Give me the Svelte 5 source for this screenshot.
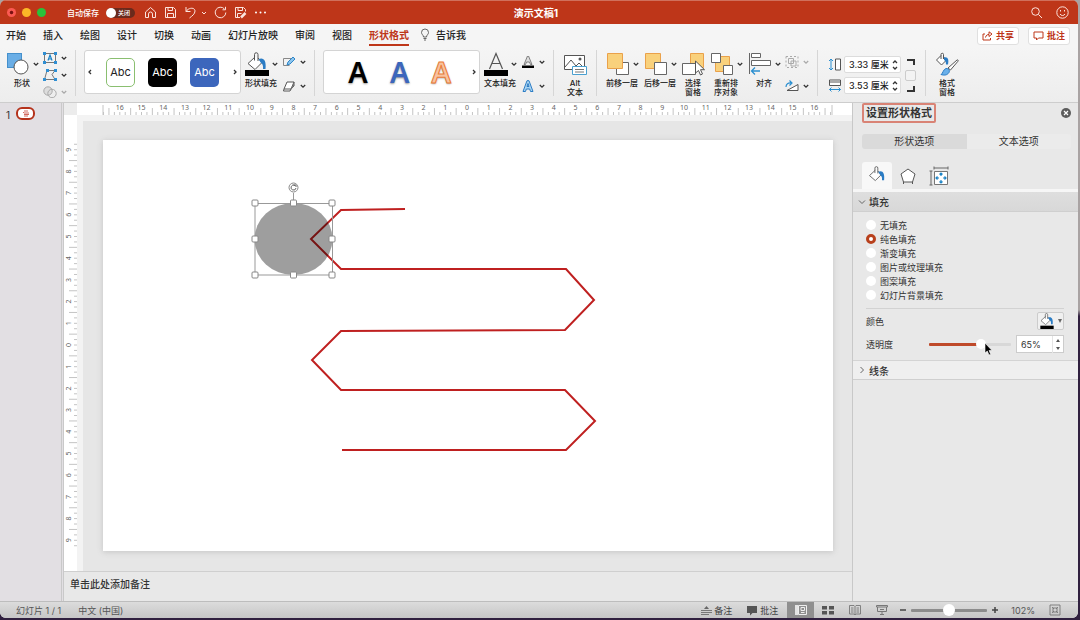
<script lang="ts">
  const tabs = ['开始', '插入', '绘图', '设计', '切换', '动画', '幻灯片放映', '审阅', '视图', '形状格式'];
  const fills = ['无填充', '纯色填充', '渐变填充', '图片或纹理填充', '图案填充', '幻灯片背景填充'];

  let activeTab = $state('形状格式');
  let fill = $state('纯色填充');
  let transparency = $state(65);
  let zoom = $state(50);
  let autoSave = $state(false);

  // Ruler ticks, four per centimetre, measured from the centre of the slide
  const unit = 21.7;

  function makeTicks(limit: number) {
    const ticks = [];
    for (let q = -limit * 4; q <= limit * 4; q++) {
      ticks.push({ pos: (q * unit) / 4, tall: Math.abs(q % 4) === 2 });
    }
    return ticks;
  }

  function makeLabels(limit: number) {
    return Array.from({ length: limit * 2 + 1 }, (_, i) => i - limit);
  }

  const hTicks = makeTicks(16.75);
  const vTicks = makeTicks(9.25);
  const hLabels = makeLabels(16);
  const vLabels = makeLabels(9);
</script>

{#snippet chevron()}
  <svg class="chev" width="6" height="6" viewBox="0 0 6 6"><path d="M.8 2L3 4.200 5.200 2" /></svg>
{/snippet}

{#snippet bucket()}
  <path d="M10 5L3 11.500 10 17.500l7-7L13 6" fill="#fff" stroke="#555" />
  <path d="M9.500 8.500V2.500a1.700 1.700 0 0 1 3.500 0V9" fill="none" stroke="#555" />
  <path d="M13.500 7c5-2 8 1 7 10h-2.500c.5-4-1-5.500-2-6z" fill="#2b7cc4" />
{/snippet}

{#snippet steppers(name: string)}
  <span class="steppers">
    <button aria-label="增加{name}"><svg width="6" height="5" viewBox="0 0 6 5"><path d="M1 4l2-2 2 2" /></svg></button>
    <button aria-label="减少{name}"><svg width="6" height="5" viewBox="0 0 6 5"><path d="M1 1l2 2 2-2" /></svg></button>
  </span>
{/snippet}

<div class="desktop">
  <div class="window">
    <header class="titlebar">
      <div class="lights">
        <button class="light close" aria-label="关闭窗口"></button>
        <button class="light min" aria-label="最小化"></button>
        <button class="light max" aria-label="全屏"></button>
      </div>
      <label class="autosave">
        <span>自动保存</span>
        <input type="checkbox" bind:checked={autoSave} />
        <span class="switch"><i></i>关闭</span>
      </label>
      <div class="quick">
        <button aria-label="主页"><svg width="13" height="13" viewBox="0 0 13 13"><path d="M1.500 6L6.500 1.500l5 4.500v5.500H8.500V8a2 2 0 0 0-4 0v3.500h-3z" /></svg></button>
        <button aria-label="保存"><svg width="13" height="13" viewBox="0 0 13 13"><path d="M1.500 1.500h8l2 2v8h-10zM4 1.500v3h4.500v-3M3.500 11.500v-4h6v4" /></svg></button>
        <button class="undo" aria-label="撤销"><svg width="13" height="13" viewBox="0 0 13 13"><path d="M2 1v4.500h4.500M2 5.500C5 1 11 1.500 11 5c0 3-3 5-5.500 7" /></svg><svg width="6" height="6" viewBox="0 0 6 6"><path d="M1 2l2 2 2-2" /></svg></button>
        <button aria-label="重做"><svg width="13" height="13" viewBox="0 0 13 13"><path d="M10.500 3a5.300 5.300 0 1 0 1.300 3.500M11.500.8v3H8.500" /></svg></button>
        <button aria-label="另存为"><svg width="13" height="13" viewBox="0 0 13 13"><path d="M6 11.500H1.500v-10h8l2 2v2M4 1.500v3h4.500v-3M3.500 11.500v-4h4" /><path d="M7 11.500l4.500-4.500" stroke-width="2.500" /></svg></button>
        <button aria-label="更多"><svg width="13" height="13" viewBox="0 0 13 13"><g fill="#fff" stroke="none"><circle cx="2" cy="6.500" r="1" /><circle cx="6.500" cy="6.500" r="1" /><circle cx="11" cy="6.500" r="1" /></g></svg></button>
      </div>
      <h1>演示文稿1</h1>
      <div class="title-right">
        <button aria-label="搜索"><svg width="13" height="13" viewBox="0 0 13 13"><circle cx="5.500" cy="5.500" r="3.800" /><path d="M8.500 8.500L12 12" /></svg></button>
        <button aria-label="反馈"><svg width="13" height="13" viewBox="0 0 13 13"><circle cx="6.500" cy="6.500" r="5.700" /><path d="M4 8c1 2 4 2 5 0M4.500 4v1.500M8.500 4v1.500" /></svg></button>
      </div>
    </header>

    <nav class="tabs">
      {#each tabs as tab}
        <button class:active={activeTab === tab} onclick={() => (activeTab = tab)}>{tab}</button>
      {/each}
      <button class="tell">
        <svg width="10" height="13" viewBox="0 0 10 13"><path d="M3.500 9C3.500 7 1.500 6.500 1.500 4.500a3.500 3.500 0 0 1 7 0C8.500 6.500 6.500 7 6.500 9zM3.500 10.500h3M4 12h2" fill="none" stroke="#555" stroke-width=".9" /></svg>
        告诉我
      </button>
      <div class="share">
        <button>
          <svg width="11" height="10" viewBox="0 0 11 10"><path d="M3 3H1v6h7.500V7M3.500 6.500C4 4 5.500 3.500 7 3.500V5.500L10 3 7 .8V3" /></svg>共享
        </button>
        <button>
          <svg width="11" height="10" viewBox="0 0 11 10"><path d="M1 1h9v6H5.500L3.500 9V7H1z" /></svg>批注
        </button>
      </div>
    </nav>

    <div class="ribbon">
      <button class="big">
        <span class="top">
          <svg width="24" height="24" viewBox="0 0 24 24"><rect x="1.500" y="1.500" width="14" height="14" fill="#6aaee6" stroke="#4590cc" /><circle cx="15" cy="15" r="7" fill="#fff" stroke="#555" /></svg>
          {@render chevron()}
        </span>
        <span>形状</span>
      </button>
      <div class="mini three">
        <button aria-label="文本框">
          <svg width="14" height="12" viewBox="0 0 14 12"><rect x="1.500" y="1.500" width="11" height="9" fill="none" stroke="#777" /><path d="M5 8.500l2-5.500 2 5.500M5.500 7h3" fill="none" stroke="#1c84c6" stroke-width="1.200" /><path d="M0 0h3v3H0zM11 0h3v3h-3zM0 9h3v3H0zM11 9h3v3h-3z" fill="#2f8fd3" /></svg>
          {@render chevron()}
        </button>
        <button aria-label="编辑形状">
          <svg width="14" height="12" viewBox="0 0 14 12"><path d="M4 1.500L1.500 10.500h10M4 1.500h8L9 5.500l3 5" fill="none" stroke="#777" /><path d="M3 0h3v3H3zM11 0h3v3h-3zM0 9h3v3H0zM11 9h3v3h-3z" fill="#2f8fd3" /></svg>
          {@render chevron()}
        </button>
        <button aria-label="合并形状" disabled>
          <svg width="14" height="12" viewBox="0 0 14 12"><circle cx="5" cy="5" r="4.200" fill="#ddd" stroke="#aaa" /><circle cx="9" cy="7.500" r="4.200" fill="none" stroke="#aaa" /></svg>
          {@render chevron()}
        </button>
      </div>
      <i class="rule"></i>

      <div class="gallery">
        <button class="turn" aria-label="上一个样式"><svg width="6" height="6" viewBox="0 0 6 6"><path d="M4 1L2 3l2 2" /></svg></button>
        <button class="swatch outline">Abc</button>
        <button class="swatch black">Abc</button>
        <button class="swatch blue">Abc</button>
        <button class="turn" aria-label="下一个样式"><svg width="6" height="6" viewBox="0 0 6 6"><path d="M2 1l2 2-2 2" /></svg></button>
      </div>
      <button class="big near">
        <span class="top">
          <svg width="24" height="24" viewBox="0 0 24 24">{@render bucket()}<path d="M0 18h24v6H0z" /></svg>
          {@render chevron()}
        </span>
        <span>形状填充</span>
      </button>
      <div class="mini">
        <button aria-label="形状轮廓">
          <svg width="14" height="12" viewBox="0 0 14 12"><path d="M10 2.500H1.500v7h6" fill="none" stroke="#888" /><path d="M5 9l1-3 5-5 2 2-5 5z" fill="#8cc5ee" stroke="#2f86c8" /></svg>
          {@render chevron()}
        </button>
        <button aria-label="形状效果">
          <svg width="14" height="12" viewBox="0 0 14 12"><path d="M5 2h7L9 9H2zM2 9l-.5 2H8l1-2M9 9l3-3V2" fill="#fff" stroke="#555" /><path d="M9 9l3-7v4L8 11z" fill="#777" /></svg>
          {@render chevron()}
        </button>
      </div>
      <i class="rule"></i>

      <div class="gallery letters">
        <button class="word">A</button>
        <button class="word blue-word">A</button>
        <button class="word orange-word">A</button>
        <button class="turn" aria-label="更多艺术字"><svg width="6" height="6" viewBox="0 0 6 6"><path d="M2 1l2 2-2 2" /></svg></button>
      </div>
      <button class="big near">
        <span class="top">
          <svg width="24" height="24" viewBox="0 0 24 24"><path d="M5.500 17L12 1.500 18.500 17M8 11.500h8" fill="none" stroke="#555" stroke-width="1.200" /><path d="M0 18h24v6H0z" /></svg>
          {@render chevron()}
        </span>
        <span>文本填充</span>
      </button>
      <div class="mini">
        <button aria-label="文本轮廓">
          <svg width="14" height="12" viewBox="0 0 14 12"><path d="M3 8.500L6.500 0h1L11 8.500H9.500L8.500 6h-3l-1 2.500z" fill="#ddd" stroke="#666" stroke-width=".8" /><path d="M1 9.500h12V12H1z" /></svg>
          {@render chevron()}
        </button>
        <button aria-label="文本效果">
          <svg width="14" height="12" viewBox="0 0 14 12"><path d="M2 11.500L6 .7h2l4 10.800H9.500L8.700 9H5.300l-.8 2.500zM6 6.500h2L7 3.500z" fill="#a9d4f2" stroke="#2b7cc4" /></svg>
          {@render chevron()}
        </button>
      </div>
      <i class="rule"></i>

      <button class="big medium">
        <span class="top">
          <svg width="24" height="24" viewBox="0 0 24 24"><path d="M1.500 3.500h20v14h-20zM2 15l6-7 5 6 3-3 5 5" fill="#fff" stroke="#555" /><circle cx="17" cy="7" r="1.500" fill="#555" /><path d="M9.500 14.500h14v8h-14z" fill="#fff" stroke="#4aa0d0" /><path d="M12 17.500h9M12 20h9" stroke="#777" /></svg>
        </span>
        <span>Alt<br />文本</span>
      </button>
      <i class="rule"></i>

      <button class="big">
        <span class="top">
          <svg width="24" height="24" viewBox="0 0 24 24"><path d="M10.500 10.500h12v12h-12z" fill="#fff" stroke="#666" /><path d="M1.500 1.500h15v15h-15z" fill="#f9d17c" stroke="#eaa14a" /></svg>
          {@render chevron()}
        </span>
        <span>前移一层</span>
      </button>
      <button class="big step">
        <span class="top">
          <svg width="24" height="24" viewBox="0 0 24 24"><path d="M1.500 1.500h15v15h-15z" fill="#f9d17c" stroke="#eaa14a" /><path d="M10.500 10.500h12v12h-12z" fill="#fff" stroke="#666" /></svg>
          {@render chevron()}
        </span>
        <span>后移一层</span>
      </button>
      <button class="big narrow step">
        <span class="top">
          <svg width="24" height="24" viewBox="0 0 24 24"><path d="M9.500 1.500h13v14h-13z" fill="#f9d17c" stroke="#eaa14a" /><path d="M1.500 11.500h13v11h-13z" fill="#fff" stroke="#666" /><path d="M14.500 9v12l3-2.500 2 4.500 2-1-2-4.300h4z" fill="#fff" stroke="#555" /></svg>
        </span>
        <span>选择<br />窗格</span>
      </button>
      <button class="big step">
        <span class="top">
          <svg width="24" height="24" viewBox="0 0 24 24"><path d="M5.500 4.500h14v15h-14z" fill="#f9d17c" stroke="#eaa14a" /><path d="M1.500 1.500h9v9h-9zM13.500 13.500h9v9h-9z" fill="#fff" stroke="#666" /></svg>
          {@render chevron()}
        </span>
        <span>重新排<br />序对象</span>
      </button>
      <button class="big step">
        <span class="top">
          <svg width="24" height="24" viewBox="0 0 24 24"><path d="M1.500 1v21M3.500 1.500h9v4h-9zM3.500 8.500h19v5h-19z" fill="#fff" stroke="#666" /><path d="M12 19H3.500M7 15.500L3.500 19 7 22.500" fill="none" stroke="#2b8fd0" stroke-width="1.300" /></svg>
          {@render chevron()}
        </span>
        <span>对齐</span>
      </button>
      <div class="mini">
        <button aria-label="组合" disabled>
          <svg width="14" height="12" viewBox="0 0 14 12"><path d="M3.500 2.500h5v5h-5zM6 5h5v5H6z" fill="none" stroke="#aaa" /><path d="M1 .5h12v11H1z" fill="none" stroke="#aaa" stroke-dasharray="2 2" /></svg>
          {@render chevron()}
        </button>
        <button aria-label="旋转">
          <svg width="14" height="12" viewBox="0 0 14 12"><path d="M2 10.500h11v-6z" fill="#fff" stroke="#555" /><path d="M1 7C1 4 3 2.500 6.500 3M4.500.5L7 3 4.500 5.500" fill="none" stroke="#2b8fd0" stroke-width="1.200" /></svg>
          {@render chevron()}
        </button>
      </div>
      <i class="rule"></i>

      <div class="size">
        <div class="fields">
          <label>
            <svg width="14" height="13" viewBox="0 0 14 13"><path d="M3 1v11M1 3l2-2 2 2M1 10l2 2 2-2" fill="none" stroke="#2b8fd0" /><path d="M7.500 1v11h5V1z" fill="#fff" stroke="#555" /></svg>
            <span class="box"><input aria-label="高度" value="3.33 厘米" />{@render steppers('高度')}</span>
          </label>
          <label>
            <svg width="14" height="13" viewBox="0 0 14 13"><path d="M1.500 10.500h11M3.500 8.500l-2 2 2 2M10.500 8.500l2 2-2 2" fill="none" stroke="#2b8fd0" /><path d="M1.500 1v5.500h11V1zM1.500 3h11" fill="#fff" stroke="#555" /></svg>
            <span class="box"><input aria-label="宽度" value="3.53 厘米" />{@render steppers('宽度')}</span>
          </label>
        </div>
        <div class="lock">
          <svg width="8" height="6" viewBox="0 0 8 6"><path d="M0 1h7v5" /></svg>
          <input type="checkbox" aria-label="锁定纵横比" />
          <svg width="8" height="6" viewBox="0 0 8 6"><path d="M0 5h7V0" /></svg>
        </div>
      </div>
      <i class="rule"></i>

      <button class="big medium">
        <span class="top">
          <svg width="24" height="24" viewBox="0 0 24 24"><path d="M6 3.500L1.500 8 6.500 13l5-5L8.500 5M6 7V2.500a1.200 1.200 0 0 1 2.500 0V7" fill="#fff" stroke="#555" /><path d="M9 5.500c4-1 5 2 4 7h-2c0-3-1-4-2-4.500z" fill="#2b7cc4" /><path d="M13 16L22 8c1-.5 1.500.5 1 1.200L15.500 18z" fill="#fff" stroke="#555" /><path d="M6 22.500c2-1 2-5 5-6 3 0 4 2 3 4-2 3-5 3-8 2z" fill="#6ab0ea" stroke="#2b7cc4" /></svg>
        </span>
        <span>格式<br />窗格</span>
      </button>
    </div>

    <main class="work">
      <aside class="thumbs">
        <span>1</span>
        <button aria-label="幻灯片 1">
          <svg width="13" height="7" viewBox="0 0 13 7"><path d="M5 1h4M4 2l1 1h5M5 4.500h5M5 6h4" fill="none" stroke="#c7463a" stroke-width=".8" /></svg>
        </button>
      </aside>

      <section class="editor">
        <div class="stage">
          <div class="corner"></div>
          <svg class="ruler-h" width="100%" height="12">
            <g transform="translate(390 0)">
              {#each hTicks as tick}
                <line x1={tick.pos} x2={tick.pos} y1={tick.tall ? 5 : 9} y2="12" />
              {/each}
              {#each hLabels as n}
                <text x={n * unit} y="7">{Math.abs(n)}</text>
              {/each}
              <line x1="-364" x2="-364" y1="2" y2="12" />
              <line x1="365" x2="365" y1="2" y2="12" />
            </g>
          </svg>
          <svg class="ruler-v" width="13" height="100%">
            <g transform="translate(0 230)">
              {#each vTicks as tick}
                <line y1={tick.pos} y2={tick.pos} x1={tick.tall ? 5 : 10} x2="13" />
              {/each}
              {#each vLabels as n}
                <text transform="translate(7 {n * unit}) rotate(-90)">{Math.abs(n)}</text>
              {/each}
            </g>
          </svg>
          <div class="canvas">
            <svg class="slide" viewBox="0 0 730 411">
              <path d="M302 69L238 70 208 99l30 30h225l28 31-29 30-224 1-29 29 29 30h224l30 31-29 29H239" fill="none" stroke="#bf2020" stroke-width="2" />
              <ellipse cx="190.500" cy="99" rx="39" ry="36" fill="#000" fill-opacity=".38" />
              <g fill="none" stroke="#999">
                <path d="M152 63.500h77.500V135H152zM190.500 53v10" />
              </g>
              <g fill="#fff" stroke="#888">
                {#each [[152, 63], [190.5, 63], [229, 63], [152, 99], [229, 99], [152, 135], [190.5, 135], [229, 135]] as [x, y]}
                  <rect x={x - 3} y={y - 3} width="6" height="6" rx="1" />
                {/each}
                <circle cx="190.500" cy="47.500" r="4.500" />
              </g>
              <path d="M192 45.500a2.500 2.500 0 1 0 1 2.500M190.500 45h2.500v2" fill="none" stroke="#555" stroke-width=".9" />
            </svg>
          </div>
        </div>
        <div class="notes">单击此处添加备注</div>
      </section>

      <aside class="pane">
        <div class="pane-head">
          <h2>设置形状格式</h2>
          <button aria-label="关闭窗格"><svg width="10" height="10" viewBox="0 0 10 10"><circle cx="5" cy="5" r="5" fill="#5c5c5c" /><path d="M3 3l4 4M7 3L3 7" stroke="#fff" stroke-width="1.200" /></svg></button>
        </div>
        <div class="segments">
          <button class="on">形状选项</button>
          <button>文本选项</button>
        </div>
        <div class="kinds">
          <button class="on" aria-label="填充与线条"><svg width="20" height="20" viewBox="0 0 24 24">{@render bucket()}</svg></button>
          <button aria-label="效果"><svg width="20" height="20" viewBox="0 0 20 20"><path d="M10 3l7 5-2.500 8h-9L3 8z" fill="#fff" stroke="#555" /><path d="M5.500 16v2M14.500 16v2" stroke="#555" /></svg></button>
          <button aria-label="大小与属性"><svg width="20" height="20" viewBox="0 0 20 20"><path d="M5.500 5.500h13v13h-13z" fill="#fff" stroke="#777" /><path d="M5 2h14M5 .5v3M19 .5v3M2 5v14M.5 5h3M.5 19h3" stroke="#666" /><path d="M12 7v3M12 14v3M7 12h3M14 12h3M10.500 8.500L12 7l1.500 1.500M10.500 15.500L12 17l1.500-1.500M8.500 10.500L7 12l1.500 1.500M15.500 10.500L17 12l-1.500 1.500" fill="none" stroke="#1c84c6" stroke-width="1.200" /></svg></button>
        </div>
        <button class="section">
          <svg width="8" height="8" viewBox="0 0 8 8"><path d="M1 2.500l3 3 3-3" /></svg>填充
        </button>
        <div class="options">
          {#each fills as name}
            <label><input type="radio" name="fill" value={name} bind:group={fill} />{name}</label>
          {/each}
        </div>
        <div class="settings">
          <div class="row">
            <span>颜色</span>
            <button class="color" aria-label="填充颜色">
              <svg width="16" height="16" viewBox="0 0 24 24">{@render bucket()}<path d="M2 19h20v5H2z" /></svg>
              <svg width="4" height="4" viewBox="0 0 4 4"><path d="M0 0h4L2 4z" fill="#666" /></svg>
            </button>
          </div>
          <div class="row">
            <label for="transparency">透明度</label>
            <div class="slider">
              <input id="transparency" type="range" min="0" max="100" bind:value={transparency} style="--fill: {transparency}%" />
              <svg class="pointer" width="9" height="14" viewBox="0 0 9 14"><path d="M1 1v10l2.300-2 1.700 4 1.700-.8L5 8.500h3z" fill="#000" stroke="#fff" stroke-width=".6" /></svg>
            </div>
            <span class="percent">
              <input aria-label="透明度百分比" value="{transparency}%" />
              <span class="arrows">
                <button aria-label="增加"><svg width="4" height="3" viewBox="0 0 4 3"><path d="M0 3l2-3 2 3z" fill="#555" /></svg></button>
                <button aria-label="减少"><svg width="4" height="3" viewBox="0 0 4 3"><path d="M0 0l2 3 2-3z" fill="#555" /></svg></button>
              </span>
            </span>
          </div>
        </div>
        <button class="section closed">
          <svg width="8" height="8" viewBox="0 0 8 8"><path d="M2.500 1l3 3-3 3" /></svg>线条
        </button>
      </aside>
    </main>

    <footer class="status">
      <span class="count">幻灯片 1 / 1</span>
      <span>中文 (中国)</span>
      <div class="views">
        <button class="text"><svg width="11" height="11" viewBox="0 0 11 11"><path d="M0 5.500h11M0 7.500h11M0 9.500h8" stroke="#777" /><path d="M3 4l2.500-3L8 4z" fill="#666" /></svg>备注</button>
        <button class="text comments"><svg width="11" height="11" viewBox="0 0 11 11"><path d="M0 1h10v7H5.500L3 10.500V8H0z" fill="#555" /></svg>批注</button>
        <button class="view on" aria-label="普通视图"><svg width="12" height="12" viewBox="0 0 12 12"><path d="M0 1h3v10H0z" fill="#e4e4e4" /><path d="M3.500 1.500h8v9h-8zM6 3.500h3.500v3H6zM6 8.500h3.500" fill="none" stroke="#eee" /></svg></button>
        <button class="view" aria-label="幻灯片浏览"><svg width="12" height="12" viewBox="0 0 12 12"><path d="M0 2h5v3.500H0zM7 2h5v3.500H7zM0 7h5v3.500H0zM7 7h5v3.500H7z" fill="#555" /></svg></button>
        <button class="view" aria-label="阅读视图"><svg width="12" height="12" viewBox="0 0 12 12"><path d="M.5 1.500h4.500l1 1 1-1h4.500v8.500H7l-1 1-1-1H.5zM6 2.500v8M2 4h2.500M2 6h2.500M2 8h2.500M7.500 4H10M7.500 6H10M7.500 8H10" fill="none" stroke="#777" stroke-width=".9" /></svg></button>
        <button class="view" aria-label="幻灯片放映"><svg width="12" height="12" viewBox="0 0 12 12"><path d="M.5 1.500h11v1.500H.5zM1.500 3v4.500h9V3M6 7.500v3M4 10.500h4M4 5.500h4" fill="none" stroke="#777" /></svg></button>
      </div>
      <div class="zoom">
        <button aria-label="缩小"><svg width="8" height="8" viewBox="0 0 8 8"><path d="M1 4h6" stroke="#444" stroke-width="1.500" /></svg></button>
        <input type="range" min="0" max="100" aria-label="缩放" bind:value={zoom} />
        <button aria-label="放大"><svg width="8" height="8" viewBox="0 0 8 8"><path d="M1 4h6M4 1v6" stroke="#444" stroke-width="1.500" /></svg></button>
      </div>
      <span class="percent-text">102%</span>
      <button class="fit" aria-label="适应窗口"><svg width="12" height="12" viewBox="0 0 12 12"><path d="M1 1h10v10H1zM3 3l2 2M9 3L7 5M3 9l2-2M9 9L7 7M5 3v2H3M7 3v2h2M5 9V7H3M7 9V7h2" fill="none" stroke="#777" stroke-width=".9" /></svg></button>
    </footer>
  </div>
</div>

<style>
  :global(body) {
    font-family: Inter, 'Noto Sans CJK SC', sans-serif;
    font-size: 10px;
    color: #333;
  }

  .desktop {
    display: flex;
    box-sizing: border-box;
    min-height: 100vh;
    padding: 0 2px 2px 0;
    background: linear-gradient(#a9a3a3 50%, #30203f 51%);
  }

  .window {
    flex: 1;
    display: flex;
    flex-direction: column;
    min-width: 0;
    overflow: hidden;
    border-radius: 6px;
    background: #e8e8e8;
  }

  button {
    margin: 0;
    padding: 0;
    border: 0;
    background: none;
    font: inherit;
    color: inherit;
    cursor: pointer;
  }

  input {
    margin: 0;
    font: inherit;
    color: inherit;
  }

  svg {
    display: block;
    flex: none;
  }

  /* Title bar */
  .titlebar {
    display: flex;
    align-items: center;
    box-sizing: border-box;
    height: 24px;
    padding: 0 9px 0 7px;
    border-top: 1px solid #d0705c;
    background: #be3619;
    color: #fff;
  }

  .titlebar svg {
    fill: none;
    stroke: #fbe4de;
  }

  .lights {
    display: flex;
    gap: 6px;
  }

  .light {
    width: 9px;
    height: 9px;
    border-radius: 50%;
  }

  .close {
    background: radial-gradient(#7a1010 20%, #fb5a52 35%);
  }

  .min {
    background: #fcb827;
  }

  .max {
    background: #29c23a;
  }

  .autosave {
    display: flex;
    align-items: center;
    gap: 7px;
    margin-left: 21px;
    font-size: 8px;
    font-weight: 500;
  }

  .autosave input {
    position: absolute;
    opacity: 0;
  }

  .switch {
    display: flex;
    align-items: center;
    gap: 2px;
    width: 29px;
    height: 10px;
    border-radius: 5px;
    background: #6a2a1c;
    font-size: 6px;
  }

  .switch i {
    width: 10px;
    height: 10px;
    border-radius: 50%;
    background: #fff;
  }

  .quick {
    display: flex;
    gap: 7px;
    width: 124px;
    margin-left: 9px;
  }

  .undo {
    display: flex;
    align-items: center;
    gap: 4px;
  }

  h1 {
    flex: 1;
    margin: 0;
    padding-right: 226px;
    font-size: 10px;
    font-weight: 700;
    text-align: center;
  }

  .title-right {
    display: flex;
    gap: 13px;
  }

  /* Tabs */
  .tabs {
    display: flex;
    align-items: center;
    gap: 17px;
    height: 23px;
    padding: 0 8px 0 6px;
    background: #f5f5f5;
    font-weight: 500;
    color: #222;
  }

  .tabs > button {
    height: 21px;
    border-bottom: 2px solid transparent;
    white-space: nowrap;
  }

  .tabs > .active {
    border-color: #be3619;
    color: #be3619;
    font-weight: 700;
  }

  .tabs > .tell {
    display: flex;
    align-items: center;
    gap: 6px;
    margin-left: -6px;
  }

  .share {
    display: flex;
    gap: 9px;
    margin-left: auto;
    color: #be3619;
    font-size: 9px;
    font-weight: 700;
  }

  .share button {
    display: flex;
    align-items: center;
    justify-content: center;
    gap: 3px;
    box-sizing: border-box;
    width: 42px;
    height: 18px;
    border: 1px solid #e0e0e0;
    border-radius: 3px;
    background: #fff;
  }

  .share svg {
    fill: none;
    stroke: #be3619;
  }

  /* Ribbon */
  .ribbon {
    display: flex;
    align-items: flex-start;
    box-sizing: border-box;
    height: 56px;
    padding: 3px 5px 0;
    border-bottom: 1px solid #cdcdcd;
    background: linear-gradient(#f5f5f5, #ededed);
    font-size: 8px;
    font-weight: 500;
    line-height: 9px;
    color: #222;
  }

  .rule {
    flex: none;
    width: 1px;
    height: 46px;
    margin: 0 8px;
    background: #d6d6d6;
  }

  .big {
    display: flex;
    flex: none;
    flex-direction: column;
    align-items: center;
    gap: 3px;
    width: 34px;
    padding-top: 2px;
    white-space: nowrap;
  }

  .big.medium {
    width: 26px;
  }

  .big.narrow {
    width: 24px;
  }

  .big.near {
    margin-left: 3px;
  }

  .big.step {
    margin-left: 4px;
  }

  .top {
    display: flex;
    align-items: center;
    gap: 3px;
  }

  .chev,
  .turn svg,
  .steppers svg {
    fill: none;
    stroke: #333;
    stroke-width: 1.3;
  }

  :disabled .chev {
    stroke: #aaa;
  }

  .mini {
    display: flex;
    flex: none;
    flex-direction: column;
    gap: 12px;
    margin-left: 4px;
    padding-top: 6px;
  }

  .mini.three {
    gap: 5px;
    padding-top: 2px;
  }

  .mini button {
    display: flex;
    align-items: center;
    gap: 4px;
  }

  .gallery {
    display: flex;
    flex: none;
    align-items: center;
    justify-content: space-between;
    box-sizing: border-box;
    width: 157px;
    height: 44px;
    padding: 0 2px;
    border: 1px solid #d4d4d4;
    border-radius: 3px;
    background: #fff;
  }

  .swatch {
    box-sizing: border-box;
    width: 29px;
    height: 29px;
    border-radius: 5px;
    font-size: 11px;
    font-weight: 400;
  }

  .outline {
    border: 1px solid #8abf70;
  }

  .black {
    background: #000;
    color: #fff;
  }

  .blue {
    background: #3c66bc;
    color: #fff;
  }

  .letters {
    padding-left: 22px;
  }

  .word {
    width: 24px;
    font-family: 'Noto Sans', sans-serif;
    font-size: 29px;
    font-weight: 600;
    line-height: 32px;
    color: #000;
    text-shadow: 0 1px 2px #999;
  }

  .blue-word {
    color: #3c66bc;
  }

  .orange-word {
    color: #f8c3a0;
    -webkit-text-stroke: 1px #ec7c38;
  }

  .size {
    display: flex;
    gap: 4px;
    padding: 6px 1px 0 2px;
  }

  .fields {
    display: flex;
    flex-direction: column;
    gap: 4px;
  }

  .fields label {
    display: flex;
    align-items: center;
    gap: 2px;
  }

  .box {
    display: flex;
    align-items: center;
    box-sizing: border-box;
    width: 57px;
    height: 17px;
    padding: 0 2px 0 4px;
    border: 1px solid #dcdcdc;
    border-radius: 2px;
    background: #fff;
  }

  .box input {
    flex: 1;
    min-width: 0;
    padding: 0;
    border: 0;
    outline: 0;
    background: none;
    font-size: 9px;
  }

  .steppers {
    display: flex;
    flex-direction: column;
    gap: 2px;
  }

  .lock {
    display: flex;
    flex-direction: column;
    align-items: center;
    gap: 5px;
    padding-top: 3px;
  }

  .lock svg {
    fill: none;
    stroke: #333;
    stroke-width: 2;
  }

  .lock input {
    appearance: none;
    box-sizing: border-box;
    width: 11px;
    height: 11px;
    border: 1px solid #ccc;
    border-radius: 2px;
    background: #f3f3f3;
  }

  /* Work area */
  .work {
    flex: 1;
    display: grid;
    grid-template-columns: 64px minmax(0, 1fr) 226px;
  }

  .thumbs {
    display: flex;
    align-items: flex-start;
    gap: 6px;
    padding: 4px 0 0 6px;
    border-right: 3px double #c9c9c9;
    background: #e2dfe3;
    line-height: 17px;
  }

  .thumbs button {
    padding: 1px;
    border: 2px solid #b5331c;
    border-radius: 6px;
    background: #fff;
  }

  .editor {
    display: flex;
    flex-direction: column;
  }

  .stage {
    flex: 1;
    display: grid;
    grid-template: 12px 1fr / 13px 1fr;
  }

  .corner {
    background: #ececec;
  }

  .ruler-h,
  .ruler-v {
    background: #fff;
    font-family: 'Noto Sans', sans-serif;
    font-size: 7px;
  }

  .ruler-h text,
  .ruler-v text {
    fill: #666;
    text-anchor: middle;
  }

  .ruler-h line,
  .ruler-v line {
    stroke: #c4c4c4;
  }

  .canvas {
    padding: 19px 19px 20px 20px;
    border: solid #f3f3f3;
    border-width: 6px 0 0 6px;
    background: #e6e6e6;
  }

  .slide {
    width: 100%;
    background: #fff;
    box-shadow: 0 1px 6px #c4c4c4;
  }

  .notes {
    box-sizing: border-box;
    height: 30px;
    padding: 0 6px;
    border-top: 1px solid #cfcfcf;
    line-height: 24px;
    font-weight: 500;
  }

  /* Format pane */
  .pane {
    border-left: 1px solid #c8c8c8;
    font-size: 9px;
    color: #333;
  }

  .pane-head {
    display: flex;
    align-items: center;
    justify-content: space-between;
    padding: 0 7px 0 9px;
  }

  h2 {
    margin: 0;
    padding: 0 2px;
    border: 2px solid #d98375;
    border-radius: 2px;
    font-size: 11px;
    font-weight: 700;
    line-height: 16px;
  }

  .segments {
    display: flex;
    margin: 11px 7px 0 9px;
    border-radius: 3px;
    background: #ebebeb;
    font-size: 10px;
  }

  .segments button {
    flex: 1;
    height: 15px;
    line-height: 15px;
  }

  .segments .on {
    border-radius: 3px 0 0 3px;
    background: #dadada;
  }

  .kinds {
    display: flex;
    gap: 1px;
    margin-top: 13px;
    padding-left: 9px;
    border-bottom: 3px solid #f6f6f6;
  }

  .kinds button {
    display: flex;
    align-items: center;
    justify-content: center;
    width: 30px;
    height: 27px;
  }

  .kinds .on {
    border-radius: 3px 3px 0 0;
    background: #f8f8f8;
  }

  .section {
    display: flex;
    align-items: center;
    gap: 3px;
    box-sizing: border-box;
    width: 100%;
    height: 20px;
    padding-left: 5px;
    border-bottom: 1px solid #cfcfcf;
    background: linear-gradient(#dedede, #d8d8d8);
    font-size: 10px;
    font-weight: 500;
  }

  .section.closed {
    border-top: 1px solid #d4d4d4;
    background: #efefef;
  }

  .section svg {
    fill: none;
    stroke: #666;
  }

  .options {
    display: flex;
    flex-direction: column;
    margin: 0 14px 0 13px;
    padding: 6px 0;
    border-bottom: 1px solid #d2d2d2;
  }

  .options label {
    display: flex;
    align-items: center;
    gap: 4px;
    height: 14px;
  }

  .options input {
    appearance: none;
    box-sizing: border-box;
    width: 10px;
    height: 10px;
    border-radius: 50%;
    background: #fff;
  }

  .options input:checked {
    border: 3px solid #b8401c;
  }

  .settings {
    display: flex;
    flex-direction: column;
    gap: 5px;
    padding: 3px 14px 7px 13px;
  }

  .row {
    display: flex;
    align-items: center;
    justify-content: space-between;
    height: 18px;
  }

  .color {
    display: flex;
    align-items: center;
    gap: 3px;
    box-sizing: border-box;
    height: 18px;
    padding: 0 1px;
    border: 1px solid #ccc;
    border-radius: 2px;
    background: #f0f0f0;
  }

  .slider {
    position: relative;
    flex: 1;
    margin: 0 5px 0 36px;
  }

  input[type='range'] {
    appearance: none;
    display: block;
    width: 100%;
    height: 10px;
    background: none;
  }

  input[type='range']::-webkit-slider-runnable-track {
    height: 3px;
    border-radius: 1px;
    background: linear-gradient(to right, #bf4a2a var(--fill), #d8d8d8 var(--fill));
  }

  input[type='range']::-webkit-slider-thumb {
    appearance: none;
    width: 10px;
    height: 10px;
    margin-top: -4px;
    border-radius: 50%;
    background: #fff;
  }

  .pointer {
    position: absolute;
    left: 67%;
    top: 3px;
  }

  .percent {
    display: flex;
    align-items: center;
    box-sizing: border-box;
    width: 48px;
    height: 18px;
    border: 1px solid #ccc;
    background: #fff;
  }

  .percent input {
    flex: 1;
    min-width: 0;
    padding: 0 0 0 4px;
    border: 0;
    outline: 0;
    background: none;
  }

  .arrows {
    display: flex;
    flex-direction: column;
    gap: 5px;
    padding: 3px;
    border-left: 1px solid #e4e4e4;
  }

  /* Status bar */
  .status {
    display: flex;
    align-items: center;
    box-sizing: border-box;
    height: 17px;
    padding: 0 17px 0 16px;
    border-top: 1px solid #bdbdbd;
    background: linear-gradient(#dcdcdc, #c6c6c6);
    font-size: 9px;
    color: #555;
    white-space: nowrap;
  }

  .count {
    margin-right: 17px;
  }

  .views {
    display: flex;
    align-items: center;
    height: 100%;
    margin-left: auto;
  }

  .text {
    display: flex;
    align-items: center;
    gap: 2px;
    margin-right: 15px;
    color: #444;
  }

  .comments {
    margin-right: 9px;
  }

  .view {
    display: flex;
    align-items: center;
    justify-content: center;
    width: 27px;
    height: 100%;
  }

  .view.on {
    background: #8f8f8f;
  }

  .zoom {
    display: flex;
    align-items: center;
    gap: 4px;
    margin: 0 12px 0 4px;
  }

  .zoom input[type='range'] {
    width: 76px;
    height: 12px;
  }

  .zoom input[type='range']::-webkit-slider-runnable-track {
    background: #8c8c8c;
  }

  .zoom input[type='range']::-webkit-slider-thumb {
    width: 12px;
    height: 12px;
    margin-top: -5px;
  }

  .percent-text {
    margin-right: 14px;
  }
</style>
